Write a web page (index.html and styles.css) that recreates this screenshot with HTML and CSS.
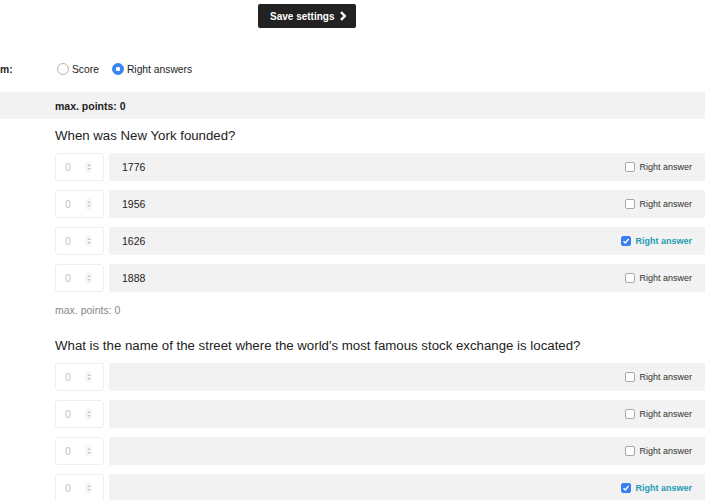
FILE: index.html
```html
<!DOCTYPE html>
<html>
<head>
<meta charset="utf-8">
<link rel="stylesheet" href="styles.css">
</head>
<body>
<div class="page">
  <div class="topbar">
    <button class="save-btn">Save settings
      <svg class="chev" width="8" height="10" viewBox="0 0 8 10"><polyline points="2,1.2 5.8,5 2,8.8" fill="none" stroke="#fff" stroke-width="2.4"/></svg>
    </button>
  </div>

  <div class="scoring">
    <span class="scoring-label">m:</span>
    <label class="radio-opt first"><span class="radio"></span>Score</label>
    <label class="radio-opt"><span class="radio on"></span>Right answers</label>
  </div>

  <div class="maxbar">max. points: 0</div>

  <section class="question">
    <h2 class="q-title">When was New York founded?</h2>
    <div class="answers">
      <div class="answer">
        <div class="num"><span class="num-val">0</span><span class="spin"><i class="up"></i><i class="down"></i></span></div>
        <div class="abar"><span class="atext">1776</span><label class="ra"><span class="cb"></span>Right answer</label></div>
      </div>
      <div class="answer">
        <div class="num"><span class="num-val">0</span><span class="spin"><i class="up"></i><i class="down"></i></span></div>
        <div class="abar"><span class="atext">1956</span><label class="ra"><span class="cb"></span>Right answer</label></div>
      </div>
      <div class="answer">
        <div class="num"><span class="num-val">0</span><span class="spin"><i class="up"></i><i class="down"></i></span></div>
        <div class="abar"><span class="atext">1626</span><label class="ra on"><span class="cb on"><svg width="8" height="8" viewBox="0 0 8 8"><polyline points="1.5,4.2 3.3,6 6.6,2" fill="none" stroke="#fff" stroke-width="1.4"/></svg></span>Right answer</label></div>
      </div>
      <div class="answer">
        <div class="num"><span class="num-val">0</span><span class="spin"><i class="up"></i><i class="down"></i></span></div>
        <div class="abar"><span class="atext">1888</span><label class="ra"><span class="cb"></span>Right answer</label></div>
      </div>
    </div>
    <div class="q-points">max. points: 0</div>
  </section>

  <section class="question second">
    <h2 class="q-title">What is the name of the street where the world's most famous stock exchange is located?</h2>
    <div class="answers">
      <div class="answer">
        <div class="num"><span class="num-val">0</span><span class="spin"><i class="up"></i><i class="down"></i></span></div>
        <div class="abar"><span class="atext"></span><label class="ra"><span class="cb"></span>Right answer</label></div>
      </div>
      <div class="answer">
        <div class="num"><span class="num-val">0</span><span class="spin"><i class="up"></i><i class="down"></i></span></div>
        <div class="abar"><span class="atext"></span><label class="ra"><span class="cb"></span>Right answer</label></div>
      </div>
      <div class="answer">
        <div class="num"><span class="num-val">0</span><span class="spin"><i class="up"></i><i class="down"></i></span></div>
        <div class="abar"><span class="atext"></span><label class="ra"><span class="cb"></span>Right answer</label></div>
      </div>
      <div class="answer">
        <div class="num"><span class="num-val">0</span><span class="spin"><i class="up"></i><i class="down"></i></span></div>
        <div class="abar"><span class="atext"></span><label class="ra on"><span class="cb on"><svg width="8" height="8" viewBox="0 0 8 8"><polyline points="1.5,4.2 3.3,6 6.6,2" fill="none" stroke="#fff" stroke-width="1.4"/></svg></span>Right answer</label></div>
      </div>
    </div>
  </section>
</div>
</body>
</html>
```

FILE: styles.css
```css
html, body {
  margin: 0;
  padding: 0;
  background: #fff;
}
body {
  font-family: "Liberation Sans", Arial, Helvetica, sans-serif;
  color: #222;
  overflow: hidden;
  height: 500px;
}
.page {
  padding-right: 15px;
}
.topbar {
  padding: 4px 0 0 258px;
  height: 24px;
}
.save-btn {
  display: flex;
  align-items: center;
  gap: 5px;
  height: 24px;
  width: 98px;
  padding: 0 0 0 12px;
  border: none;
  border-radius: 2px;
  background: #222;
  color: #fff;
  font-family: inherit;
  font-weight: bold;
  font-size: 10px;
  cursor: pointer;
}
.chev {
  display: block;
}
.scoring {
  display: flex;
  align-items: center;
  height: 14px;
  margin-top: 34px;
  font-size: 10.3px;
}
.scoring-label {
  width: 55px;
  font-weight: bold;
  color: #222;
}
.radio-opt {
  display: flex;
  align-items: center;
  gap: 3px;
  margin-left: 13px;
}
.radio-opt.first {
  margin-left: 2px;
}
.radio {
  width: 10px;
  height: 10px;
  border: 1px solid #b5b5b5;
  border-radius: 50%;
  background: #fff;
  box-sizing: content-box;
  display: inline-block;
}
.radio.on {
  border-color: #3a85f0;
  background: radial-gradient(circle, #fff 0 2px, #3a85f0 2.5px);
}
.maxbar {
  margin-top: 16px;
  height: 27px;
  display: flex;
  align-items: center;
  padding-left: 55px;
  background: #f2f2f2;
  font-weight: bold;
  font-size: 10.5px;
}
.question {
  padding-left: 55px;
}
.q-title {
  margin: 8px 0 8px;
  height: 18px;
  line-height: 18px;
  font-size: 13.25px;
  font-weight: normal;
  color: #222;
}
.question.second .q-title {
  margin-top: 20px;
}
.answers {
  display: flex;
  flex-direction: column;
  gap: 9px;
}
.answer {
  display: flex;
  gap: 5px;
  height: 28px;
}
.num {
  width: 49px;
  box-sizing: border-box;
  border: 1px solid #efefef;
  border-radius: 3px;
  background: #fff;
  display: flex;
  align-items: center;
  padding-left: 9px;
}
.num-val {
  font-size: 10.5px;
  color: #c2c2c2;
  width: 18px;
}
.spin {
  width: 7px;
  height: 12px;
  border-radius: 4px;
  background: #f7f7f7;
  display: flex;
  flex-direction: column;
  align-items: center;
  justify-content: center;
  gap: 2px;
  margin-left: 2px;
}
.spin i {
  width: 0;
  height: 0;
  border-left: 2px solid transparent;
  border-right: 2px solid transparent;
}
.spin .up {
  border-bottom: 2px solid #c8c8c8;
}
.spin .down {
  border-top: 2px solid #c8c8c8;
}
.abar {
  flex: 1;
  background: #f2f2f2;
  display: flex;
  align-items: center;
  justify-content: space-between;
  padding: 0 13px;
}
.atext {
  font-size: 10.5px;
  color: #222;
}
.ra {
  display: flex;
  align-items: center;
  gap: 4px;
  font-size: 9px;
  color: #333;
}
.ra.on {
  color: #1f9cb2;
  font-weight: bold;
}
.cb {
  width: 8px;
  height: 8px;
  border: 1px solid #a8a8a8;
  border-radius: 2px;
  background: #fff;
  display: flex;
  align-items: center;
  justify-content: center;
}
.cb.on {
  border-color: #3a7ff0;
  background: #3a7ff0;
}
.q-points {
  margin-top: 11px;
  height: 14px;
  line-height: 14px;
  font-size: 10.5px;
  color: #888;
}
```
